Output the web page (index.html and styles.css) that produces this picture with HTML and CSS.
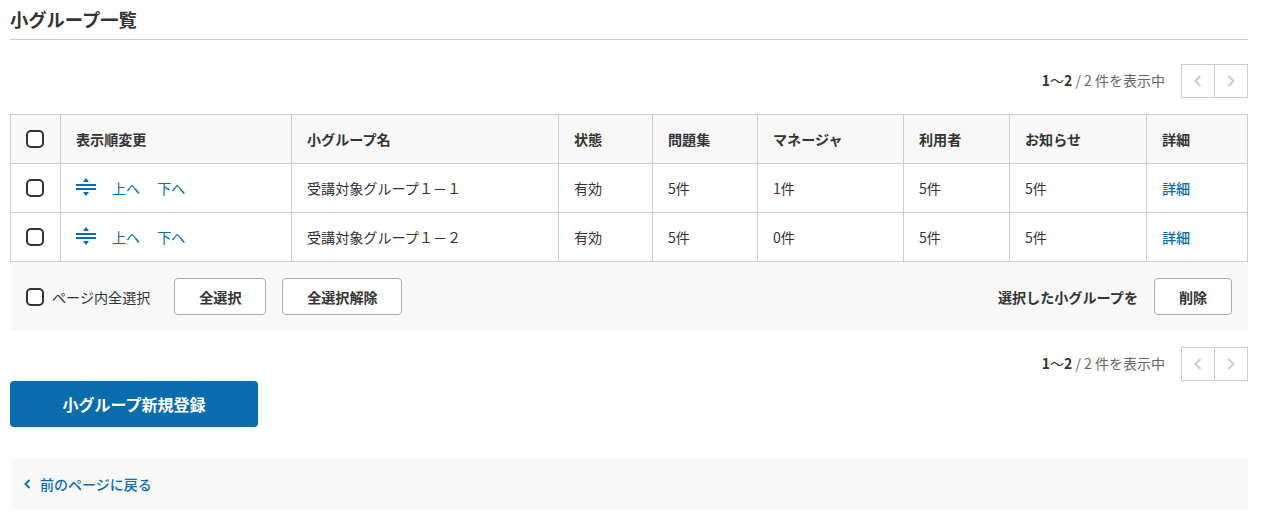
FILE: index.html
```html
<!DOCTYPE html>
<html lang="ja">
<head>
    <meta charset="UTF-8">
    <title>小グループ一覧</title>
    <link rel="stylesheet" href="styles.css">
</head>
<body>
    <div class="content">
        <h2 class="page-title">小グループ一覧</h2>

        <div class="pager-row pager-top">
            <span class="pager-text"><b>1</b><span class="wave">〜</span><b>2</b> / 2 件を表示中</span>
            <div class="pager">
                <span class="pager-btn"><svg width="8" height="12" viewBox="0 0 8 12"><path d="M6.5 1 L1.5 6 L6.5 11" fill="none" stroke="#ccc" stroke-width="2"/></svg></span>
                <span class="pager-btn"><svg width="8" height="12" viewBox="0 0 8 12"><path d="M1.5 1 L6.5 6 L1.5 11" fill="none" stroke="#ccc" stroke-width="2"/></svg></span>
            </div>
        </div>

        <table class="group-table">
            <colgroup>
                <col class="col-check"><col class="col-order"><col class="col-name"><col class="col-status"><col class="col-book"><col class="col-manager"><col class="col-user"><col class="col-notice"><col class="col-detail">
            </colgroup>
            <thead>
                <tr>
                    <th class="check-cell"><span class="checkbox"></span></th>
                    <th>表示順変更</th>
                    <th>小グループ名</th>
                    <th>状態</th>
                    <th>問題集</th>
                    <th>マネージャ</th>
                    <th>利用者</th>
                    <th>お知らせ</th>
                    <th>詳細</th>
                </tr>
            </thead>
            <tbody>
                <tr>
                    <td class="check-cell"><span class="checkbox"></span></td>
                    <td>
                        <div class="order-links">
                            <svg class="sort-icon" width="20" height="18" viewBox="0 0 20 18"><path d="M10 0 L13 4 H7 Z M10 18 L7 14 H13 Z" fill="#096cab"/><path d="M0 7 H20 M0 11 H20" stroke="#096cab" stroke-width="2"/></svg>
                            <a href="#">上へ</a>
                            <a href="#">下へ</a>
                        </div>
                    </td>
                    <td>受講対象グループ１－１</td>
                    <td>有効</td>
                    <td>5件</td>
                    <td>1件</td>
                    <td>5件</td>
                    <td>5件</td>
                    <td><a href="#" class="detail-link">詳細</a></td>
                </tr>
                <tr>
                    <td class="check-cell"><span class="checkbox"></span></td>
                    <td>
                        <div class="order-links">
                            <svg class="sort-icon" width="20" height="18" viewBox="0 0 20 18"><path d="M10 0 L13 4 H7 Z M10 18 L7 14 H13 Z" fill="#096cab"/><path d="M0 7 H20 M0 11 H20" stroke="#096cab" stroke-width="2"/></svg>
                            <a href="#">上へ</a>
                            <a href="#">下へ</a>
                        </div>
                    </td>
                    <td>受講対象グループ１－２</td>
                    <td>有効</td>
                    <td>5件</td>
                    <td>0件</td>
                    <td>5件</td>
                    <td>5件</td>
                    <td><a href="#" class="detail-link">詳細</a></td>
                </tr>
            </tbody>
        </table>

        <div class="action-bar">
            <div class="action-left">
                <label class="select-page"><span class="checkbox"></span>ページ内全選択</label>
                <button class="btn btn-all">全選択</button>
                <button class="btn btn-clear">全選択解除</button>
            </div>
            <div class="action-right">
                <span class="action-label">選択した小グループを</span>
                <button class="btn btn-delete">削除</button>
            </div>
        </div>

        <div class="pager-row pager-bottom">
            <span class="pager-text"><b>1</b><span class="wave">〜</span><b>2</b> / 2 件を表示中</span>
            <div class="pager">
                <span class="pager-btn"><svg width="8" height="12" viewBox="0 0 8 12"><path d="M6.5 1 L1.5 6 L6.5 11" fill="none" stroke="#ccc" stroke-width="2"/></svg></span>
                <span class="pager-btn"><svg width="8" height="12" viewBox="0 0 8 12"><path d="M1.5 1 L6.5 6 L1.5 11" fill="none" stroke="#ccc" stroke-width="2"/></svg></span>
            </div>
        </div>

        <button class="btn-primary">小グループ新規登録</button>

        <div class="back-bar">
            <a href="#"><svg width="7" height="10" viewBox="0 0 7 10"><path d="M5.500 1 L1.500 5 L5.500 9" fill="none" stroke="#096cab" stroke-width="1.800"/></svg>前のページに戻る</a>
        </div>
    </div>
</body>
</html>
```

FILE: styles.css
```css
* {
    box-sizing: border-box;
}

body {
    margin: 0;
    padding: 0 18px 0 10px;
    font-family: "Noto Sans CJK JP", "Noto Sans", sans-serif;
    font-size: 14.1px;
    color: #333;
    background-color: #fff;
}

a {
    color: #096cab;
    text-decoration: none;
}

.page-title {
    margin: 0;
    height: 40px;
    padding-top: 6px;
    font-size: 18.3px;
    line-height: 26px;
    font-weight: 700;
    border-bottom: 1px solid #ccc;
}

.pager-row {
    display: flex;
    justify-content: flex-end;
    align-items: center;
    gap: 16px;
    height: 34px;
}

.pager-top {
    margin-top: 24px;
    margin-bottom: 16px;
}

.pager-bottom {
    margin-top: 16px;
}

.pager-text {
    font-size: 14px;
    line-height: 20px;
    color: #666;
    margin-top: -2px;
}

.pager-text b {
    color: #333;
}

.wave {
    color: #333;
}

.pager {
    display: flex;
    width: 67px;
    height: 34px;
    border: 1px solid #ccc;
}

.pager-btn {
    flex: 1;
    display: flex;
    align-items: center;
    justify-content: center;
}

.pager-btn + .pager-btn {
    border-left: 1px solid #ccc;
}

.group-table {
    width: 1238px;
    border-collapse: separate;
    border-spacing: 0;
    table-layout: fixed;
}

.col-check { width: 51px; }
.col-order { width: 231px; }
.col-name { width: 267px; }
.col-status { width: 94px; }
.col-book { width: 105px; }
.col-manager { width: 146px; }
.col-user { width: 106px; }
.col-notice { width: 137px; }
.col-detail { width: 101px; }

.group-table th,
.group-table td {
    height: 49px;
    padding: 0 15px;
    border-right: 1px solid #ccc;
    border-bottom: 1px solid #ccc;
    text-align: left;
    font-size: 14.1px;
    line-height: 20px;
}

.group-table th {
    height: 50px;
    border-top: 1px solid #ccc;
    background-color: #f8f8f8;
    font-weight: 700;
}

.group-table .check-cell {
    padding: 0 0 0 15px;
    border-left: 1px solid #ccc;
}

.checkbox {
    display: block;
    flex: none;
    width: 18px;
    height: 18px;
    background-color: #fff;
    border: 2px solid #333;
    border-radius: 5px;
}

.order-links {
    display: flex;
    align-items: center;
}

.order-links a {
    margin-right: 17px;
}

.sort-icon {
    display: block;
    margin-top: -2px;
    margin-right: 16px;
}

.detail-link {
    font-weight: 500;
}

.action-bar {
    display: flex;
    justify-content: space-between;
    align-items: center;
    height: 69px;
    padding: 0 16px;
    background-color: #f8f8f8;
}

.action-left,
.action-right {
    display: flex;
    align-items: center;
    gap: 16px;
}

.select-page {
    display: flex;
    align-items: center;
    gap: 8px;
    margin-right: 8px;
}

.btn {
    height: 37px;
    padding: 0;
    font-family: inherit;
    font-size: 14.1px;
    font-weight: 700;
    color: #333;
    background-color: #fff;
    border: 1px solid #aaa;
    border-radius: 4px;
}

.btn-all { width: 92px; }
.btn-clear { width: 120px; }
.btn-delete { width: 78px; }

.action-label {
    font-weight: 700;
}

.btn-primary {
    display: block;
    width: 248px;
    height: 46px;
    padding: 0;
    font-family: inherit;
    font-size: 16px;
    font-weight: 700;
    color: #fff;
    background-color: #096cab;
    border: none;
    border-radius: 4px;
}

.back-bar {
    display: flex;
    align-items: center;
    height: 50px;
    margin-top: 32px;
    padding-left: 14px;
    background-color: #f8f8f8;
    font-size: 14px;
}

.back-bar a {
    display: flex;
    align-items: center;
    gap: 9px;
    font-weight: 500;
}
```
